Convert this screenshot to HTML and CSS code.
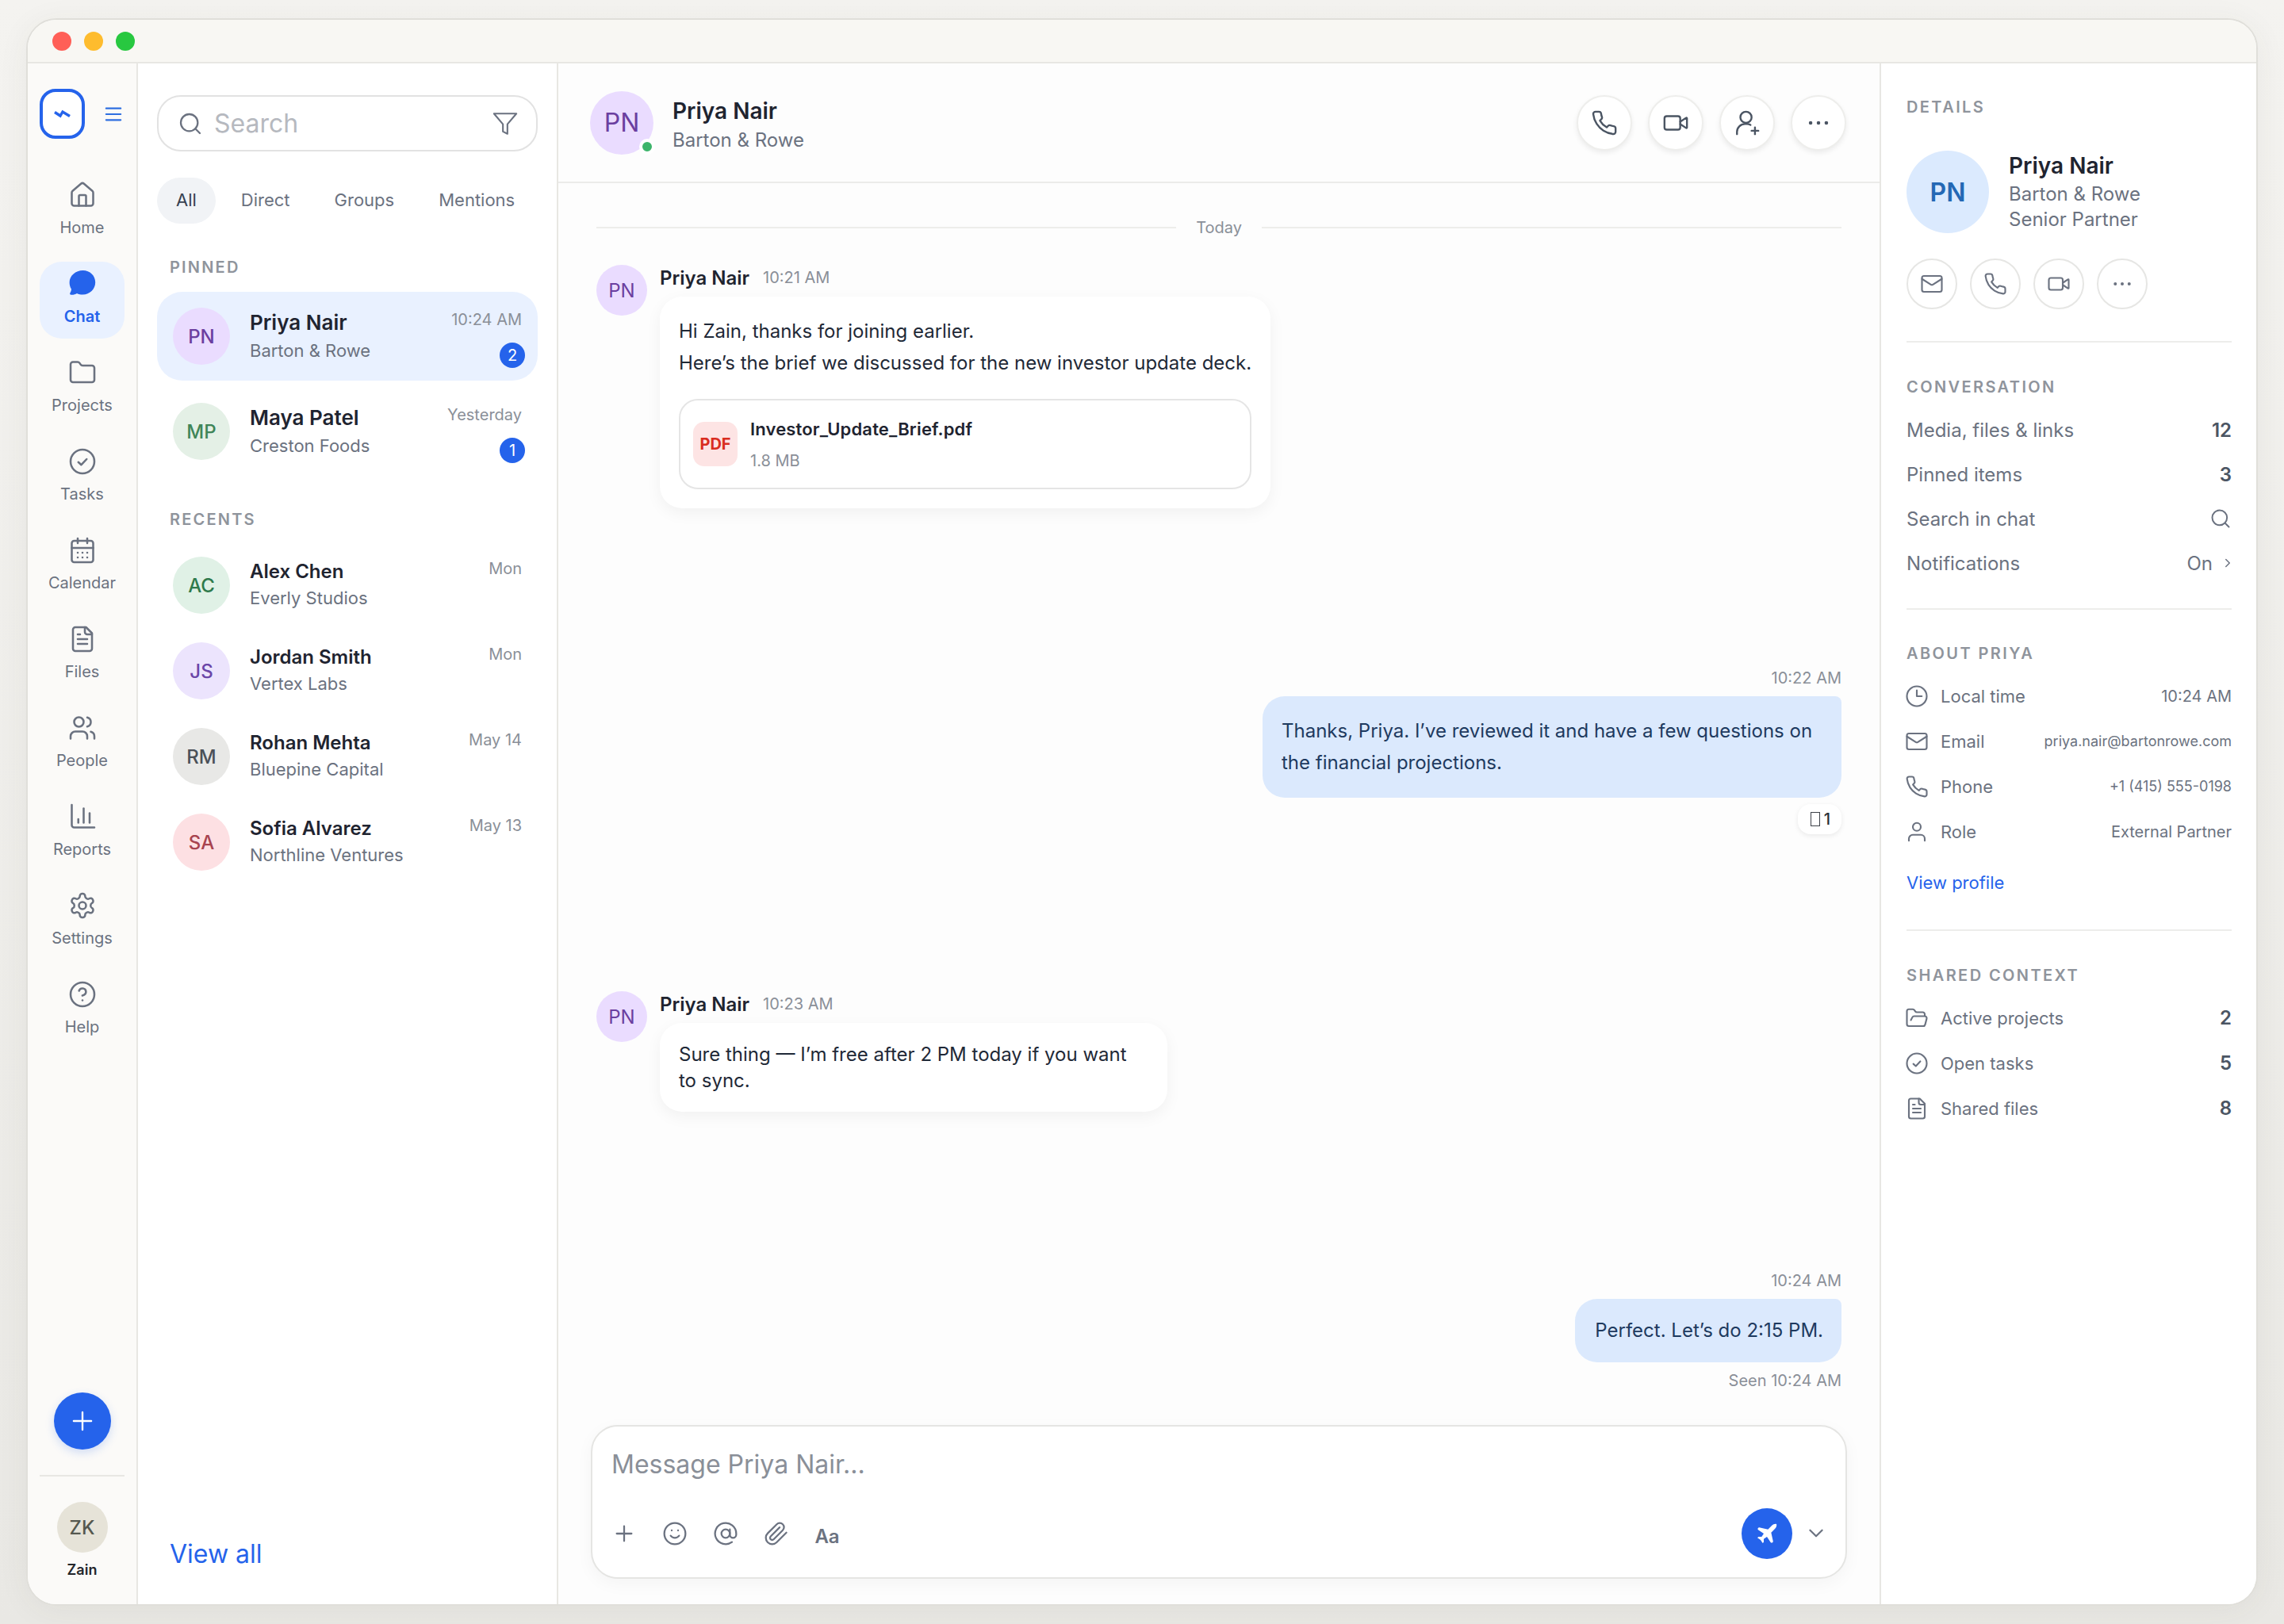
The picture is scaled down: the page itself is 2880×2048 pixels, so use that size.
FILE: index.html
```html
<!DOCTYPE html>
<html lang="en">
<head>
    <meta charset="UTF-8">
    <title>Chat - Priya Nair</title>
    <link rel="stylesheet" href="styles.css">
</head>
<body>
    <!-- icon sprite -->
    <svg class="sprite" xmlns="http://www.w3.org/2000/svg">
        <symbol id="i-home" viewBox="0 0 24 24"><path d="M15 21v-8a1 1 0 0 0-1-1h-4a1 1 0 0 0-1 1v8"/><path d="M3 10a2 2 0 0 1 .709-1.528l7-5.999a2 2 0 0 1 2.582 0l7 5.999A2 2 0 0 1 21 10v9a2 2 0 0 1-2 2H5a2 2 0 0 1-2-2z"/></symbol>
        <symbol id="i-folder" viewBox="0 0 24 24"><path d="M20 20a2 2 0 0 0 2-2V8a2 2 0 0 0-2-2h-7.9a2 2 0 0 1-1.69-.9L9.6 3.9A2 2 0 0 0 7.93 3H4a2 2 0 0 0-2 2v13a2 2 0 0 0 2 2Z"/></symbol>
        <symbol id="i-check" viewBox="0 0 24 24"><circle cx="12" cy="12" r="10"/><path d="m8.5 12.5 2.5 2.3 4.5-4.8"/></symbol>
        <symbol id="i-calendar" viewBox="0 0 24 24"><path d="M8 2v4"/><path d="M16 2v4"/><rect x="3" y="4" width="18" height="18" rx="2"/><path d="M3 10h18"/><path d="M8 14h.01"/><path d="M12 14h.01"/><path d="M16 14h.01"/><path d="M8 18h.01"/><path d="M12 18h.01"/><path d="M16 18h.01"/></symbol>
        <symbol id="i-file" viewBox="0 0 24 24"><path d="M15 2H6a2 2 0 0 0-2 2v16a2 2 0 0 0 2 2h12a2 2 0 0 0 2-2V7Z"/><path d="M14 2v4a2 2 0 0 0 2 2h4"/><path d="M8 12h8"/><path d="M8 16h8"/><path d="M8 8h2"/></symbol>
        <symbol id="i-people" viewBox="0 0 24 24"><path d="M16 21v-2a4 4 0 0 0-4-4H6a4 4 0 0 0-4 4v2"/><circle cx="9" cy="7" r="4"/><path d="M22 21v-2a4 4 0 0 0-3-3.87"/><path d="M16 3.13a4 4 0 0 1 0 7.75"/></symbol>
        <symbol id="i-chart" viewBox="0 0 24 24"><path d="M3 2v17a2 2 0 0 0 2 2h17"/><path d="M8.5 17v-3"/><path d="M13 17V5"/><path d="M18 17V9"/></symbol>
        <symbol id="i-gear" viewBox="0 0 24 24"><path d="M12.22 2h-.44a2 2 0 0 0-2 2v.18a2 2 0 0 1-1 1.73l-.43.25a2 2 0 0 1-2 0l-.15-.08a2 2 0 0 0-2.73.73l-.22.38a2 2 0 0 0 .73 2.73l.15.1a2 2 0 0 1 1 1.72v.51a2 2 0 0 1-1 1.74l-.15.09a2 2 0 0 0-.73 2.73l.22.38a2 2 0 0 0 2.73.73l.15-.08a2 2 0 0 1 2 0l.43.25a2 2 0 0 1 1 1.73V20a2 2 0 0 0 2 2h.44a2 2 0 0 0 2-2v-.18a2 2 0 0 1 1-1.73l.43-.25a2 2 0 0 1 2 0l.15.08a2 2 0 0 0 2.73-.73l.22-.39a2 2 0 0 0-.73-2.73l-.15-.08a2 2 0 0 1-1-1.74v-.5a2 2 0 0 1 1-1.74l.15-.09a2 2 0 0 0 .73-2.73l-.22-.38a2 2 0 0 0-2.73-.73l-.15.08a2 2 0 0 1-2 0l-.43-.25a2 2 0 0 1-1-1.73V4a2 2 0 0 0-2-2z"/><circle cx="12" cy="12" r="3"/></symbol>
        <symbol id="i-help" viewBox="0 0 24 24"><circle cx="12" cy="12" r="10"/><path d="M9.09 9a3 3 0 0 1 5.83 1c0 2-3 3-3 3"/><path d="M12 17h.01"/></symbol>
        <symbol id="i-search" viewBox="0 0 24 24"><circle cx="11" cy="11" r="8"/><path d="m21 21-4.3-4.3"/></symbol>
        <symbol id="i-funnel" viewBox="0 0 24 24"><path d="M22 3H2l8 9.46V19l4 2v-8.54L22 3z"/></symbol>
        <symbol id="i-phone" viewBox="0 0 24 24"><path d="M22 16.92v3a2 2 0 0 1-2.18 2 19.79 19.79 0 0 1-8.63-3.07 19.5 19.5 0 0 1-6-6 19.79 19.79 0 0 1-3.07-8.67A2 2 0 0 1 4.11 2h3a2 2 0 0 1 2 1.72 12.84 12.84 0 0 0 .7 2.81 2 2 0 0 1-.45 2.11L8.09 9.91a16 16 0 0 0 6 6l1.27-1.27a2 2 0 0 1 2.11-.45 12.84 12.84 0 0 0 2.81.7A2 2 0 0 1 22 16.92z"/></symbol>
        <symbol id="i-video" viewBox="0 0 24 24"><path d="m16 13 5.2 3.5a.5.5 0 0 0 .8-.4V7.9a.5.5 0 0 0-.8-.4L16 11"/><rect x="2" y="6" width="14" height="12" rx="2"/></symbol>
        <symbol id="i-user-plus" viewBox="0 0 24 24"><circle cx="11" cy="7" r="5"/><path d="M3 22v-2a7 7 0 0 1 7-7h2a6 6 0 0 1 3 .8"/><path d="M19 16v6"/><path d="M16 19h6"/></symbol>
        <symbol id="i-mail" viewBox="0 0 24 24"><rect x="2" y="4" width="20" height="16" rx="2"/><path d="m22 7-8.97 5.7a1.94 1.94 0 0 1-2.06 0L2 7"/></symbol>
        <symbol id="i-clock" viewBox="0 0 24 24"><circle cx="12" cy="12" r="10"/><path d="M12 6v6h5"/></symbol>
        <symbol id="i-user" viewBox="0 0 24 24"><path d="M20 21v-2a4 4 0 0 0-4-4H8a4 4 0 0 0-4 4v2"/><circle cx="12" cy="7" r="4"/></symbol>
        <symbol id="i-folder-open" viewBox="0 0 24 24"><path d="m6 14 1.5-2.9A2 2 0 0 1 9.24 10H20a2 2 0 0 1 1.94 2.5l-1.54 6a2 2 0 0 1-1.95 1.5H4a2 2 0 0 1-2-2V5a2 2 0 0 1 2-2h3.9a2 2 0 0 1 1.69.9l.81 1.2a2 2 0 0 0 1.67.9H18a2 2 0 0 1 2 2v2"/></symbol>
        <symbol id="i-plus" viewBox="0 0 24 24"><path d="M5 12h14"/><path d="M12 5v14"/></symbol>
        <symbol id="i-smile" viewBox="0 0 24 24"><circle cx="12" cy="12" r="10"/><path d="M8 14s1.5 2 4 2 4-2 4-2"/><path d="M9 9h.01"/><path d="M15 9h.01"/></symbol>
        <symbol id="i-at" viewBox="0 0 24 24"><circle cx="12" cy="12" r="4"/><path d="M16 8v5a3 3 0 0 0 6 0v-1a10 10 0 1 0-4 8"/></symbol>
        <symbol id="i-clip" viewBox="0 0 24 24"><path d="m21.44 11.05-9.19 9.19a6 6 0 0 1-8.49-8.49l8.57-8.57A4 4 0 1 1 18 8.84l-8.59 8.57a2 2 0 0 1-2.83-2.83l8.49-8.48"/></symbol>
        <symbol id="i-chevron-down" viewBox="0 0 24 24"><path d="m5 8 7 7 7-7"/></symbol>
        <symbol id="i-chevron-right" viewBox="0 0 24 24"><path d="m9 6 6 6-6 6"/></symbol>
        <symbol id="i-more" viewBox="0 0 24 24"><circle cx="5" cy="12" r="1.6" class="solid"/><circle cx="12" cy="12" r="1.6" class="solid"/><circle cx="19" cy="12" r="1.6" class="solid"/></symbol>
    </svg>

    <div class="window">
        <div class="titlebar">
            <span class="dot dot-red"></span>
            <span class="dot dot-yellow"></span>
            <span class="dot dot-green"></span>
        </div>

        <div class="app">
            <!-- left rail -->
            <aside class="rail">
                <div class="rail-top">
                    <div class="logo">
                        <svg class="logo-bolt" viewBox="0 0 22 12"><path d="M1 3.5 8 8 11 3 20 8.5"/></svg>
                    </div>
                    <svg class="ic hamburger" viewBox="0 0 24 24"><path d="M2 4h20"/><path d="M2 12h20"/><path d="M2 20h20"/></svg>
                </div>
                <nav class="nav">
                    <a class="nav-item"><svg class="ic nav-ic"><use href="#i-home"/></svg><span>Home</span></a>
                    <a class="nav-item active">
                        <svg class="nav-ic" viewBox="2.5 2.5 20 20"><path class="chat-fill" d="M12.8 3c5 0 8.7 3.7 8.7 8.4 0 4.8-3.9 8.6-8.8 8.6-1.5 0-2.9-.3-4.1-.9-1 .7-2.5 1.1-4.1 1-.7 0-1-.7-.7-1.2.6-.9.9-1.8.9-2.8C3.7 14.7 3.4 13 3.4 11.4 3.4 6.7 7.7 3 12.8 3z"/></svg>
                        <span>Chat</span>
                    </a>
                    <a class="nav-item"><svg class="ic nav-ic"><use href="#i-folder"/></svg><span>Projects</span></a>
                    <a class="nav-item"><svg class="ic nav-ic"><use href="#i-check"/></svg><span>Tasks</span></a>
                    <a class="nav-item"><svg class="ic nav-ic"><use href="#i-calendar"/></svg><span>Calendar</span></a>
                    <a class="nav-item"><svg class="ic nav-ic"><use href="#i-file"/></svg><span>Files</span></a>
                    <a class="nav-item"><svg class="ic nav-ic"><use href="#i-people"/></svg><span>People</span></a>
                    <a class="nav-item"><svg class="ic nav-ic"><use href="#i-chart"/></svg><span>Reports</span></a>
                    <a class="nav-item"><svg class="ic nav-ic"><use href="#i-gear"/></svg><span>Settings</span></a>
                    <a class="nav-item"><svg class="ic nav-ic"><use href="#i-help"/></svg><span>Help</span></a>
                </nav>
                <button class="fab"><svg class="ic"><use href="#i-plus"/></svg></button>
                <div class="rail-rule"></div>
                <div class="me">
                    <div class="avatar avatar-me">ZK</div>
                    <div class="me-name">Zain</div>
                </div>
            </aside>

            <!-- conversation list -->
            <section class="list">
                <div class="search">
                    <svg class="ic search-ic"><use href="#i-search"/></svg>
                    <span class="search-text">Search</span>
                    <svg class="ic filter-ic"><use href="#i-funnel"/></svg>
                </div>
                <div class="tabs">
                    <span class="tab current">All</span>
                    <span class="tab">Direct</span>
                    <span class="tab">Groups</span>
                    <span class="tab">Mentions</span>
                </div>

                <div class="group-label first">PINNED</div>
                <div class="rows">
                    <div class="row row-pinned selected">
                        <div class="avatar av-purple">PN</div>
                        <div class="row-text">
                            <div class="row-name">Priya Nair</div>
                            <div class="row-sub">Barton &amp; Rowe</div>
                        </div>
                        <div class="row-meta">
                            <div class="row-time">10:24 AM</div>
                            <div class="badge">2</div>
                        </div>
                    </div>
                    <div class="row row-pinned">
                        <div class="avatar av-green">MP</div>
                        <div class="row-text">
                            <div class="row-name">Maya Patel</div>
                            <div class="row-sub">Creston Foods</div>
                        </div>
                        <div class="row-meta">
                            <div class="row-time">Yesterday</div>
                            <div class="badge">1</div>
                        </div>
                    </div>
                </div>

                <div class="group-label">RECENTS</div>
                <div class="rows">
                    <div class="row">
                        <div class="avatar av-mint">AC</div>
                        <div class="row-text">
                            <div class="row-name">Alex Chen</div>
                            <div class="row-sub">Everly Studios</div>
                        </div>
                        <div class="row-meta"><div class="row-time">Mon</div></div>
                    </div>
                    <div class="row">
                        <div class="avatar av-lilac">JS</div>
                        <div class="row-text">
                            <div class="row-name">Jordan Smith</div>
                            <div class="row-sub">Vertex Labs</div>
                        </div>
                        <div class="row-meta"><div class="row-time">Mon</div></div>
                    </div>
                    <div class="row">
                        <div class="avatar av-grey">RM</div>
                        <div class="row-text">
                            <div class="row-name">Rohan Mehta</div>
                            <div class="row-sub">Bluepine Capital</div>
                        </div>
                        <div class="row-meta"><div class="row-time">May 14</div></div>
                    </div>
                    <div class="row">
                        <div class="avatar av-pink">SA</div>
                        <div class="row-text">
                            <div class="row-name">Sofia Alvarez</div>
                            <div class="row-sub">Northline Ventures</div>
                        </div>
                        <div class="row-meta"><div class="row-time">May 13</div></div>
                    </div>
                </div>

                <a class="view-all">View all</a>
            </section>

            <!-- chat -->
            <main class="chat">
                <header class="chat-head">
                    <div class="head-avatar">
                        <div class="avatar av-purple">PN</div>
                        <span class="online"></span>
                    </div>
                    <div class="head-text">
                        <div class="head-name">Priya Nair</div>
                        <div class="head-sub">Barton &amp; Rowe</div>
                    </div>
                    <div class="head-actions">
                        <button class="round-btn"><svg class="ic"><use href="#i-phone"/></svg></button>
                        <button class="round-btn"><svg class="ic"><use href="#i-video"/></svg></button>
                        <button class="round-btn"><svg class="ic"><use href="#i-user-plus"/></svg></button>
                        <button class="round-btn"><svg class="ic"><use href="#i-more"/></svg></button>
                    </div>
                </header>

                <div class="thread">
                    <div class="day"><span>Today</span></div>

                    <div class="thread-msgs">
                        <div class="msg">
                            <div class="avatar av-purple">PN</div>
                            <div class="msg-body">
                                <div class="msg-head"><b>Priya Nair</b><span>10:21 AM</span></div>
                                <div class="bubble">
                                    <p>Hi Zain, thanks for joining earlier.</p>
                                    <p>Here’s the brief we discussed for the new investor update deck.</p>
                                    <div class="file">
                                        <div class="file-ic">PDF</div>
                                        <div>
                                            <div class="file-name">Investor_Update_Brief.pdf</div>
                                            <div class="file-size">1.8 MB</div>
                                        </div>
                                    </div>
                                </div>
                            </div>
                        </div>

                        <div class="mine mine-reacted">
                            <div class="stamp">10:22 AM</div>
                            <div class="bubble-mine wide">Thanks, Priya. I’ve reviewed it and have a few questions on the financial projections.</div>
                            <div class="reaction"><span class="tofu"></span>1</div>
                        </div>

                        <div class="msg">
                            <div class="avatar av-purple">PN</div>
                            <div class="msg-body">
                                <div class="msg-head"><b>Priya Nair</b><span>10:23 AM</span></div>
                                <div class="bubble tight">Sure thing — I’m free after 2 PM today if you want to sync.</div>
                            </div>
                        </div>

                        <div class="mine">
                            <div class="stamp">10:24 AM</div>
                            <div class="bubble-mine short">Perfect. Let’s do 2:15 PM.</div>
                            <div class="stamp seen">Seen 10:24 AM</div>
                        </div>
                    </div>
                </div>

                <div class="composer">
                    <div class="composer-input">Message Priya Nair...</div>
                    <div class="composer-tools">
                        <svg class="ic tool"><use href="#i-plus"/></svg>
                        <svg class="ic tool"><use href="#i-smile"/></svg>
                        <svg class="ic tool"><use href="#i-at"/></svg>
                        <svg class="ic tool"><use href="#i-clip"/></svg>
                        <span class="tool tool-aa">Aa</span>
                        <button class="send">
                            <svg viewBox="0 0 24 24"><path d="M17.8 19.2 16 11l3.5-3.5C21 6 21.5 4 21 3c-1-.5-3 0-4.5 1.5L13 8 4.8 6.2c-.5-.1-.9.1-1.1.5l-.3.5c-.2.5-.1 1 .3 1.3L9 12l-2 3H4l-1 1 3 2 2 3 1-1v-3l3-2 3.5 5.3c.3.4.8.5 1.3.3l.5-.2c.4-.3.6-.7.5-1.2z"/></svg>
                        </button>
                        <svg class="ic send-more"><use href="#i-chevron-down"/></svg>
                    </div>
                </div>
            </main>

            <!-- details -->
            <aside class="details">
                <div class="section-label">DETAILS</div>
                <div class="profile">
                    <div class="avatar av-blue">PN</div>
                    <div>
                        <div class="profile-name">Priya Nair</div>
                        <div class="profile-sub">Barton &amp; Rowe</div>
                        <div class="profile-sub">Senior Partner</div>
                    </div>
                </div>
                <div class="profile-actions">
                    <button class="round-btn small"><svg class="ic"><use href="#i-mail"/></svg></button>
                    <button class="round-btn small"><svg class="ic"><use href="#i-phone"/></svg></button>
                    <button class="round-btn small"><svg class="ic"><use href="#i-video"/></svg></button>
                    <button class="round-btn small"><svg class="ic"><use href="#i-more"/></svg></button>
                </div>

                <div class="rule"></div>
                <div class="section-label">CONVERSATION</div>
                <div class="detail-rows">
                    <div class="detail-row"><span>Media, files &amp; links</span><b>12</b></div>
                    <div class="detail-row"><span>Pinned items</span><b>3</b></div>
                    <div class="detail-row"><span>Search in chat</span><svg class="ic end-ic"><use href="#i-search"/></svg></div>
                    <div class="detail-row"><span>Notifications</span><span class="on">On <svg class="ic on-ic"><use href="#i-chevron-right"/></svg></span></div>
                </div>

                <div class="rule rule-tight"></div>
                <div class="section-label">ABOUT PRIYA</div>
                <div class="info-rows">
                    <div class="info-row"><svg class="ic info-ic"><use href="#i-clock"/></svg><span class="info-label">Local time</span><span class="info-value">10:24 AM</span></div>
                    <div class="info-row"><svg class="ic info-ic"><use href="#i-mail"/></svg><span class="info-label">Email</span><span class="info-value small">priya.nair@bartonrowe.com</span></div>
                    <div class="info-row"><svg class="ic info-ic"><use href="#i-phone"/></svg><span class="info-label">Phone</span><span class="info-value small">+1 (415) 555-0198</span></div>
                    <div class="info-row"><svg class="ic info-ic"><use href="#i-user"/></svg><span class="info-label">Role</span><span class="info-value">External Partner</span></div>
                </div>
                <a class="view-profile">View profile</a>

                <div class="rule rule-wide"></div>
                <div class="section-label">SHARED CONTEXT</div>
                <div class="info-rows">
                    <div class="info-row"><svg class="ic info-ic"><use href="#i-folder-open"/></svg><span class="info-label">Active projects</span><b>2</b></div>
                    <div class="info-row"><svg class="ic info-ic"><use href="#i-check"/></svg><span class="info-label">Open tasks</span><b>5</b></div>
                    <div class="info-row"><svg class="ic info-ic"><use href="#i-file"/></svg><span class="info-label">Shared files</span><b>8</b></div>
                </div>
            </aside>
        </div>
    </div>
</body>
</html>
```

FILE: styles.css
```css
* { box-sizing: border-box; }
html, body { margin: 0; height: 100%; }
body { padding: 23px 33px; background: linear-gradient(#f4f3f0, #e9e8e4); font-family: Inter, "Liberation Sans", sans-serif; color: #1f2430; }
p { margin: 0; }
button { border: none; padding: 0; background: none; font: inherit; }
.sprite { display: none; }

/* icons */
.ic { fill: none; stroke: currentColor; stroke-width: 1.7; stroke-linecap: round; stroke-linejoin: round; }
.solid { fill: currentColor; stroke: none; }

/* window */
.window { height: 2002px; display: flex; flex-direction: column; border: 2px solid #e0dfda; border-radius: 38px; overflow: hidden; background: #fff; box-shadow: 0 6px 40px rgba(60, 60, 50, 0.06); }
.titlebar { height: 55px; flex: none; display: flex; align-items: center; gap: 16px; padding-left: 31px; background: #f8f7f3; border-bottom: 2px solid #e8e7e3; }
.dot { width: 24px; height: 24px; border-radius: 50%; }
.dot-red { background: #ff5f57; }
.dot-yellow { background: #febc2e; }
.dot-green { background: #28c840; }
.app { flex: 1; display: flex; min-height: 0; }

.avatar { width: 72px; height: 72px; flex: none; border-radius: 50%; display: flex; align-items: center; justify-content: center; font-size: 24px; font-weight: 500; }
.av-purple { background: #eadcff; color: #6b3fa0; }
.av-green { background: #e4f0e6; color: #3f8558; }
.av-mint { background: #e0f1e6; color: #2f7a4c; }
.av-lilac { background: #ece4fd; color: #6b46a8; }
.av-grey { background: #e8e8e6; color: #4b5058; }
.av-pink { background: #fde0e3; color: #a8434f; }
.av-blue { background: #dbeafe; color: #2468b4; }

/* rail */
.rail { width: 139px; flex: none; display: flex; flex-direction: column; padding: 32px 15px 31px; background: #fbfaf8; border-right: 2px solid #e8e7e3; }
.rail-top { display: flex; align-items: center; justify-content: space-between; height: 63px; padding-right: 3px; }
.logo { width: 57px; height: 63px; border: 4px solid #2563eb; border-radius: 20px; background: #fff; display: flex; align-items: center; justify-content: center; }
.logo-bolt { width: 22px; height: 12px; fill: none; stroke: #2563eb; stroke-width: 3.4; stroke-linejoin: miter; }
.hamburger { width: 22px; height: 22px; color: #2f6fe0; stroke-width: 2.4; }
.nav { display: flex; flex-direction: column; gap: 15px; margin-top: 43px; }
.nav-item { height: 97px; display: flex; flex-direction: column; align-items: center; padding-top: 10px; gap: 11px; border-radius: 28px; font-size: 20px; line-height: 24px; color: #6b7280; }
.nav-ic { width: 36px; height: 36px; flex: none; }
.nav-item.active { background: #e9f1ff; color: #2563eb; font-weight: 600; }
.chat-fill { fill: #2563eb; }
.fab { width: 72px; height: 72px; margin: auto 0 0 18px; flex: none; border-radius: 50%; background: #2563eb; color: #fff; box-shadow: 0 4px 12px rgba(37, 99, 235, 0.2); display: flex; align-items: center; justify-content: center; }
.fab svg { width: 38px; height: 38px; stroke-width: 1.5; }
.rail-rule { height: 2px; flex: none; margin-top: 32px; background: #e8e7e3; }
.me { display: flex; flex-direction: column; align-items: center; margin-top: 32px; }
.avatar-me { width: 64px; height: 64px; background: #e6e3d8; color: #55584f; }
.me-name { margin-top: 10px; font-size: 18px; line-height: 24px; font-weight: 600; color: #23262b; }

/* list */
.list { width: 530px; flex: none; display: flex; flex-direction: column; padding: 40px 24px 41px 24px; background: #fff; border-right: 2px solid #e8e7e3; }
.search { height: 71px; flex: none; display: flex; align-items: center; padding: 0 22px 0 24px; border: 2px solid #e2e2e2; border-radius: 30px; }
.search-ic { width: 32px; height: 32px; color: #6b7280; }
.search-text { flex: 1; margin-left: 14px; font-size: 32px; color: #b6b9bf; }
.filter-ic { width: 34px; height: 34px; color: #6b7280; stroke-width: 1.5; }
.tabs { display: flex; gap: 8px; margin-top: 33px; }
.tab { height: 58px; padding: 0 24px; border-radius: 29px; font-size: 22px; line-height: 56px; color: #6b7280; }
.tab.current { background: #f1f3f6; color: #374151; }
.group-label { margin: 43px 0 21px 16px; font-size: 20px; line-height: 24px; font-weight: 600; letter-spacing: 2.2px; color: #8f949c; }
.group-label.first { margin-bottom: 19px; }
.rows { display: flex; flex-direction: column; gap: 8px; }
.row { height: 100px; display: flex; align-items: center; padding: 0 20px 0 20px; border-radius: 32px; }
.row-pinned { height: 112px; }
.row.selected { background: #e9f1ff; }
.row-text { flex: 1; margin-left: 25px; padding-bottom: 2px; }
.row-name { font-size: 24px; line-height: 32px; font-weight: 600; color: #1f2430; }
.row-sub { margin-top: 1px; font-size: 22px; line-height: 32px; color: #6b7280; }
.row-pinned .row-name { font-size: 26px; line-height: 36px; }
.row-meta { align-self: flex-start; display: flex; flex-direction: column; align-items: flex-end; padding-top: 17px; }
.row-pinned .row-meta { padding-top: 23px; }
.row-time { font-size: 20px; line-height: 24px; color: #8a8f98; }
.badge { width: 32px; height: 32px; margin: 17px -4px 0 0; border-radius: 50%; background: #2563eb; color: #fff; font-size: 20px; line-height: 32px; text-align: center; }
.view-all { margin: auto 0 0 16px; font-size: 32px; line-height: 44px; color: #2563eb; }

/* chat */
.chat { flex: 1; min-width: 0; display: flex; flex-direction: column; background: #fdfdfd; }
.chat-head { height: 151px; flex: none; display: flex; align-items: center; padding: 0 42px 0 40px; border-bottom: 2px solid #ececea; }
.head-avatar { position: relative; }
.head-avatar .avatar { width: 80px; height: 80px; font-size: 32px; font-weight: 400; }
.online { position: absolute; right: -2px; bottom: 0; width: 20px; height: 20px; border-radius: 50%; background: #3cb46a; border: 4px solid #fff; }
.head-text { flex: 1; margin-left: 24px; padding-top: 5px; }
.head-name { font-size: 28px; line-height: 38px; font-weight: 600; color: #1f2430; }
.head-sub { margin-top: 2px; font-size: 24px; line-height: 32px; color: #6b7280; }
.head-actions { display: flex; gap: 20px; }
.round-btn { width: 70px; height: 70px; border: 2px solid #eeeeec; border-radius: 50%; background: #fff; color: #4b5563; box-shadow: 0 3px 6px rgba(0, 0, 0, 0.07); display: flex; align-items: center; justify-content: center; }
.round-btn svg { width: 34px; height: 34px; }
.round-btn.small { width: 64px; height: 64px; border-color: #e6e6e4; box-shadow: none; color: #6b7280; }
.round-btn.small svg { width: 30px; height: 30px; }

.thread { flex: 1; min-height: 0; padding: 44px 48px 0; }
.day { display: flex; align-items: center; gap: 25px; font-size: 20px; line-height: 24px; color: #8a8f98; }
.day::before, .day::after { content: ""; flex: 1; height: 2px; background: #ededeb; }
.thread-msgs { display: flex; flex-direction: column; gap: 200px; margin-top: 35px; }
.msg { display: flex; gap: 16px; }
.msg > .avatar { width: 64px; height: 64px; font-size: 24px; font-weight: 400; }
.msg-body { min-width: 0; }
.msg-head { height: 32px; display: flex; align-items: center; gap: 17px; }
.msg-head b { font-size: 24px; font-weight: 600; color: #1f2430; }
.msg-head span { font-size: 20px; color: #8a8f98; }
.bubble { width: fit-content; margin-top: 8px; padding: 24px; border-radius: 28px; background: #fff; box-shadow: 0 6px 20px rgba(0, 0, 0, 0.05); font-size: 24px; line-height: 40px; color: #1f2937; }
.bubble.tight { max-width: 640px; padding: 23px 24px; line-height: 33px; }
.file { display: flex; align-items: center; gap: 16px; height: 114px; margin-top: 25px; padding: 0 16px; border: 2px solid #e5e5e5; border-radius: 24px; }
.file-ic { width: 56px; height: 56px; border-radius: 14px; background: #fde4e4; color: #d92d20; font-size: 20px; font-weight: 700; line-height: 56px; text-align: center; }
.file-name { font-size: 22px; line-height: 30px; font-weight: 600; letter-spacing: 0.15px; color: #1f2430; }
.file-size { margin-top: 11px; font-size: 20px; line-height: 28px; color: #8a8f98; }

.mine { display: flex; flex-direction: column; align-items: flex-end; margin: 1px 0 -1px; }
.mine-reacted { margin: 2px 0 -2px; }
.stamp { font-size: 20px; line-height: 24px; color: #8a8f98; }
.stamp.seen { margin-top: 11px; }
.bubble-mine { margin-top: 11px; padding: 24px; border-radius: 28px 8px 28px 28px; background: #dbe9fd; font-size: 24px; line-height: 40px; color: #1e3a5f; }
.bubble-mine.wide { max-width: 730px; }
.bubble-mine.short { padding: 20px 23px 20px 25px; }
.reaction { height: 38px; margin-top: 8px; padding: 0 14px 0 16px; display: flex; align-items: center; gap: 5px; border-radius: 16px; background: #fff; box-shadow: 0 2px 6px rgba(0, 0, 0, 0.08); font-size: 20px; font-weight: 500; color: #2a2f36; }
.tofu { width: 12px; height: 18px; border: 1.5px solid #3d4148; }

.composer { height: 194px; flex: none; margin: 0 41px 32px; padding: 26px 24px 0 24px; border: 2px solid #e5e5e3; border-radius: 34px; background: #fff; box-shadow: 0 6px 22px rgba(0, 0, 0, 0.04); }
.composer-input { font-size: 32px; line-height: 44px; color: #8a8f98; }
.composer-tools { display: flex; align-items: center; gap: 32px; margin-top: 33px; color: #6b7280; }
.tool { width: 32px; height: 32px; flex: none; }
.tool-aa { font-size: 24px; font-weight: 600; line-height: 40px; text-align: center; white-space: nowrap; }
.send { width: 64px; height: 64px; margin-left: auto; border-radius: 50%; background: #2563eb; display: flex; align-items: center; justify-content: center; }
.send svg { width: 32px; height: 32px; fill: #fff; }
.send-more { width: 26px; height: 26px; flex: none; margin-left: -15px; stroke-width: 2; }

/* details */
.details { width: 475px; flex: none; padding: 43px 31px 0 32px; background: #fff; border-left: 2px solid #e8e7e3; }
.section-label { font-size: 20px; line-height: 24px; font-weight: 600; letter-spacing: 2.4px; color: #8f949c; }
.profile { display: flex; align-items: center; gap: 25px; margin-top: 43px; }
.profile .avatar { width: 104px; height: 104px; font-size: 32px; font-weight: 600; }
.profile-name { margin-bottom: 2px; font-size: 28px; line-height: 36px; font-weight: 600; color: #1f2430; }
.profile-sub { font-size: 24px; line-height: 32px; color: #6b7280; }
.profile-actions { display: flex; gap: 16px; margin-top: 32px; }
.rule { height: 2px; margin: 40px 0 44px; background: #ededeb; }
.rule-tight { margin: 29px 0 43px; }
.rule-wide { margin: 44px 0 44px; }
.detail-rows { margin-top: 14px; }
.detail-row { height: 56px; display: flex; align-items: center; justify-content: space-between; font-size: 24px; color: #6b7280; }
.detail-row b, .info-row b { font-size: 24px; font-weight: 600; color: #4b5563; }
.end-ic { width: 28px; height: 28px; }
.on { display: flex; align-items: center; gap: 10px; }
.on-ic { width: 18px; height: 18px; margin-right: -4px; stroke-width: 2; }
.info-rows { margin-top: 13px; }
.info-row { height: 57px; display: flex; align-items: center; gap: 15px; color: #6b7280; }
.info-ic { width: 30px; height: 30px; margin-left: -2px; flex: none; }
.info-label { flex: 1; font-size: 22px; }
.info-value { font-size: 20px; }
.info-value.small { font-size: 18px; }
.view-profile { display: block; margin-top: 21px; font-size: 22px; line-height: 30px; color: #2563eb; }
```
